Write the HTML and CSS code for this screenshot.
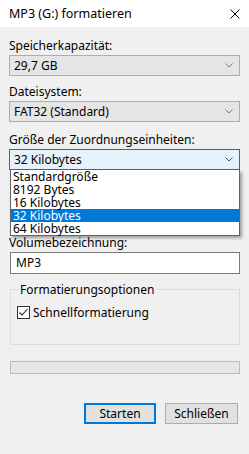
FILE: index.html
```html
<!DOCTYPE html>
<html>
<head>
<meta charset="UTF-8">
<title>MP3 (G:) formatieren</title>
<link rel="stylesheet" href="styles.css">
</head>
<body>
<div class="window">
	<!-- titel -->
	<div class="titlebar">
		<span class="title">MP3 (G:) formatieren</span>
		<svg class="close" width="10" height="10" viewBox="0 0 10 10"><path d="M0.5 0.5L9.5 9.5M9.5 0.5L0.5 9.5" stroke="#000" stroke-width="1"/></svg>
	</div>

	<div class="content">
		<div class="label lb1">Speicherkapazität:</div>
		<div class="combo">
			<span>29,7 GB</span>
			<svg class="arrow" width="8" height="5" viewBox="0 0 8 5"><path d="M0.5 0.5L4 4L7.5 0.5" fill="none" stroke="#7a7a7a"/></svg>
		</div>

		<div class="label lb2">Dateisystem:</div>
		<div class="combo">
			<span>FAT32 (Standard)</span>
			<svg class="arrow" width="8" height="5" viewBox="0 0 8 5"><path d="M0.5 0.5L4 4L7.5 0.5" fill="none" stroke="#7a7a7a"/></svg>
		</div>

		<div class="label lb3">Größe der Zuordnungseinheiten:</div>
		<div class="dropwrap">
			<div class="combo open">
				<span>32 Kilobytes</span>
				<svg class="arrow" width="8" height="5" viewBox="0 0 8 5"><path d="M0.5 0.5L4 4L7.5 0.5" fill="none" stroke="#5a5a5a"/></svg>
			</div>
			<ul class="droplist">
				<li>Standardgröße</li>
				<li>8192 Bytes</li>
				<li>16 Kilobytes</li>
				<li class="sel">32 Kilobytes</li>
				<li>64 Kilobytes</li>
			</ul>
		</div>

		<div class="label lb4">Volumebezeichnung:</div>
		<div class="textbox">MP3</div>

		<fieldset class="group">
			<legend>Formatierungsoptionen</legend>
			<div class="check">
				<svg class="box" width="13" height="13" viewBox="0 0 13 13"><rect x="0.5" y="0.5" width="12" height="12" fill="#fff" stroke="#333"/><path d="M2.5 6.5L5 9L10.5 3" fill="none" stroke="#222" stroke-width="1.1"/></svg>
				<span>Schnellformatierung</span>
			</div>
		</fieldset>

		<div class="progress"></div>

		<div class="buttons">
			<div class="btn default">Starten</div>
			<div class="btn">Schließen</div>
		</div>
	</div>
</div>
</body>
</html>
```
FILE: styles.css
```css
body{
	margin: 0;
	background: #f0f0f0;
	font-family: "Noto Sans", "Open Sans", sans-serif;
	font-size: 12px;
	color: #000;
}

.window{
	width: 249px;
	height: 454px;
	overflow: hidden;
}

.titlebar{
	height: 27px;
	background: #fff;
	display: flex;
	align-items: center;
	justify-content: space-between;
	padding: 0 9px;
}
.title{
	font-size: 12.5px;
	line-height: 15px;
}

.content{
	padding: 0 9px 0 9px;
}

.label{
	line-height: 15px;
	height: 15px;
	margin-bottom: 2px;
}
.lb1{ margin-top: 11px; }
.lb2{ margin-top: 8px; }
.lb3{ margin-top: 10px; }
.lb4{ margin-top: 65px; }

.combo{
	height: 21px;
	box-sizing: border-box;
	border: 1px solid #adadad;
	background: #e5e5e5;
	display: flex;
	align-items: center;
	justify-content: space-between;
	padding: 0 6px 0 4px;
}
.combo.open{
	background: #e5f1fb;
	border-color: #0078d7;
}

.dropwrap{
	position: relative;
}
.droplist{
	position: absolute;
	left: 1px;
	right: 0;
	top: 21px;
	margin: 0;
	padding: 0;
	list-style: none;
	background: #fff;
	border: 1px solid #646464;
	border-top: none;
	box-shadow: 2px 2px 3px rgba(0,0,0,0.35);
	z-index: 2;
}
.droplist li{
	height: 13px;
	line-height: 13px;
	padding-left: 2px;
}
.droplist li.sel{
	background: #0078d7;
	color: #fff;
}

.textbox{
	height: 22px;
	box-sizing: border-box;
	border: 1px solid #7a7a7a;
	background: #fff;
	margin-left: 1px;
	padding-left: 5px;
	line-height: 20px;
}

.group{
	margin: 8px 0 0 1px;
	padding: 7px 6px 0 6px;
	height: 63px;
	box-sizing: border-box;
	border: 1px solid #dcdcdc;
}
.group legend{
	padding: 0 2px;
	margin-left: 1px;
	line-height: 15px;
}
.check{
	display: flex;
	align-items: center;
	gap: 3px;
}
.check .box{
	flex: none;
}

.progress{
	margin: 16px 0 0 1px;
	height: 13px;
	box-sizing: border-box;
	border: 1px solid #bcbcbc;
	background: #e6e6e6;
}

.buttons{
	display: flex;
	justify-content: flex-end;
	gap: 9px;
	margin-top: 29px;
	padding-right: 2px;
}
.btn{
	width: 73px;
	height: 21px;
	box-sizing: border-box;
	border: 1px solid #adadad;
	background: #e1e1e1;
	text-align: center;
	line-height: 19px;
}
.btn.default{
	width: 72px;
	border: 2px solid #0078d7;
	line-height: 17px;
}
```
